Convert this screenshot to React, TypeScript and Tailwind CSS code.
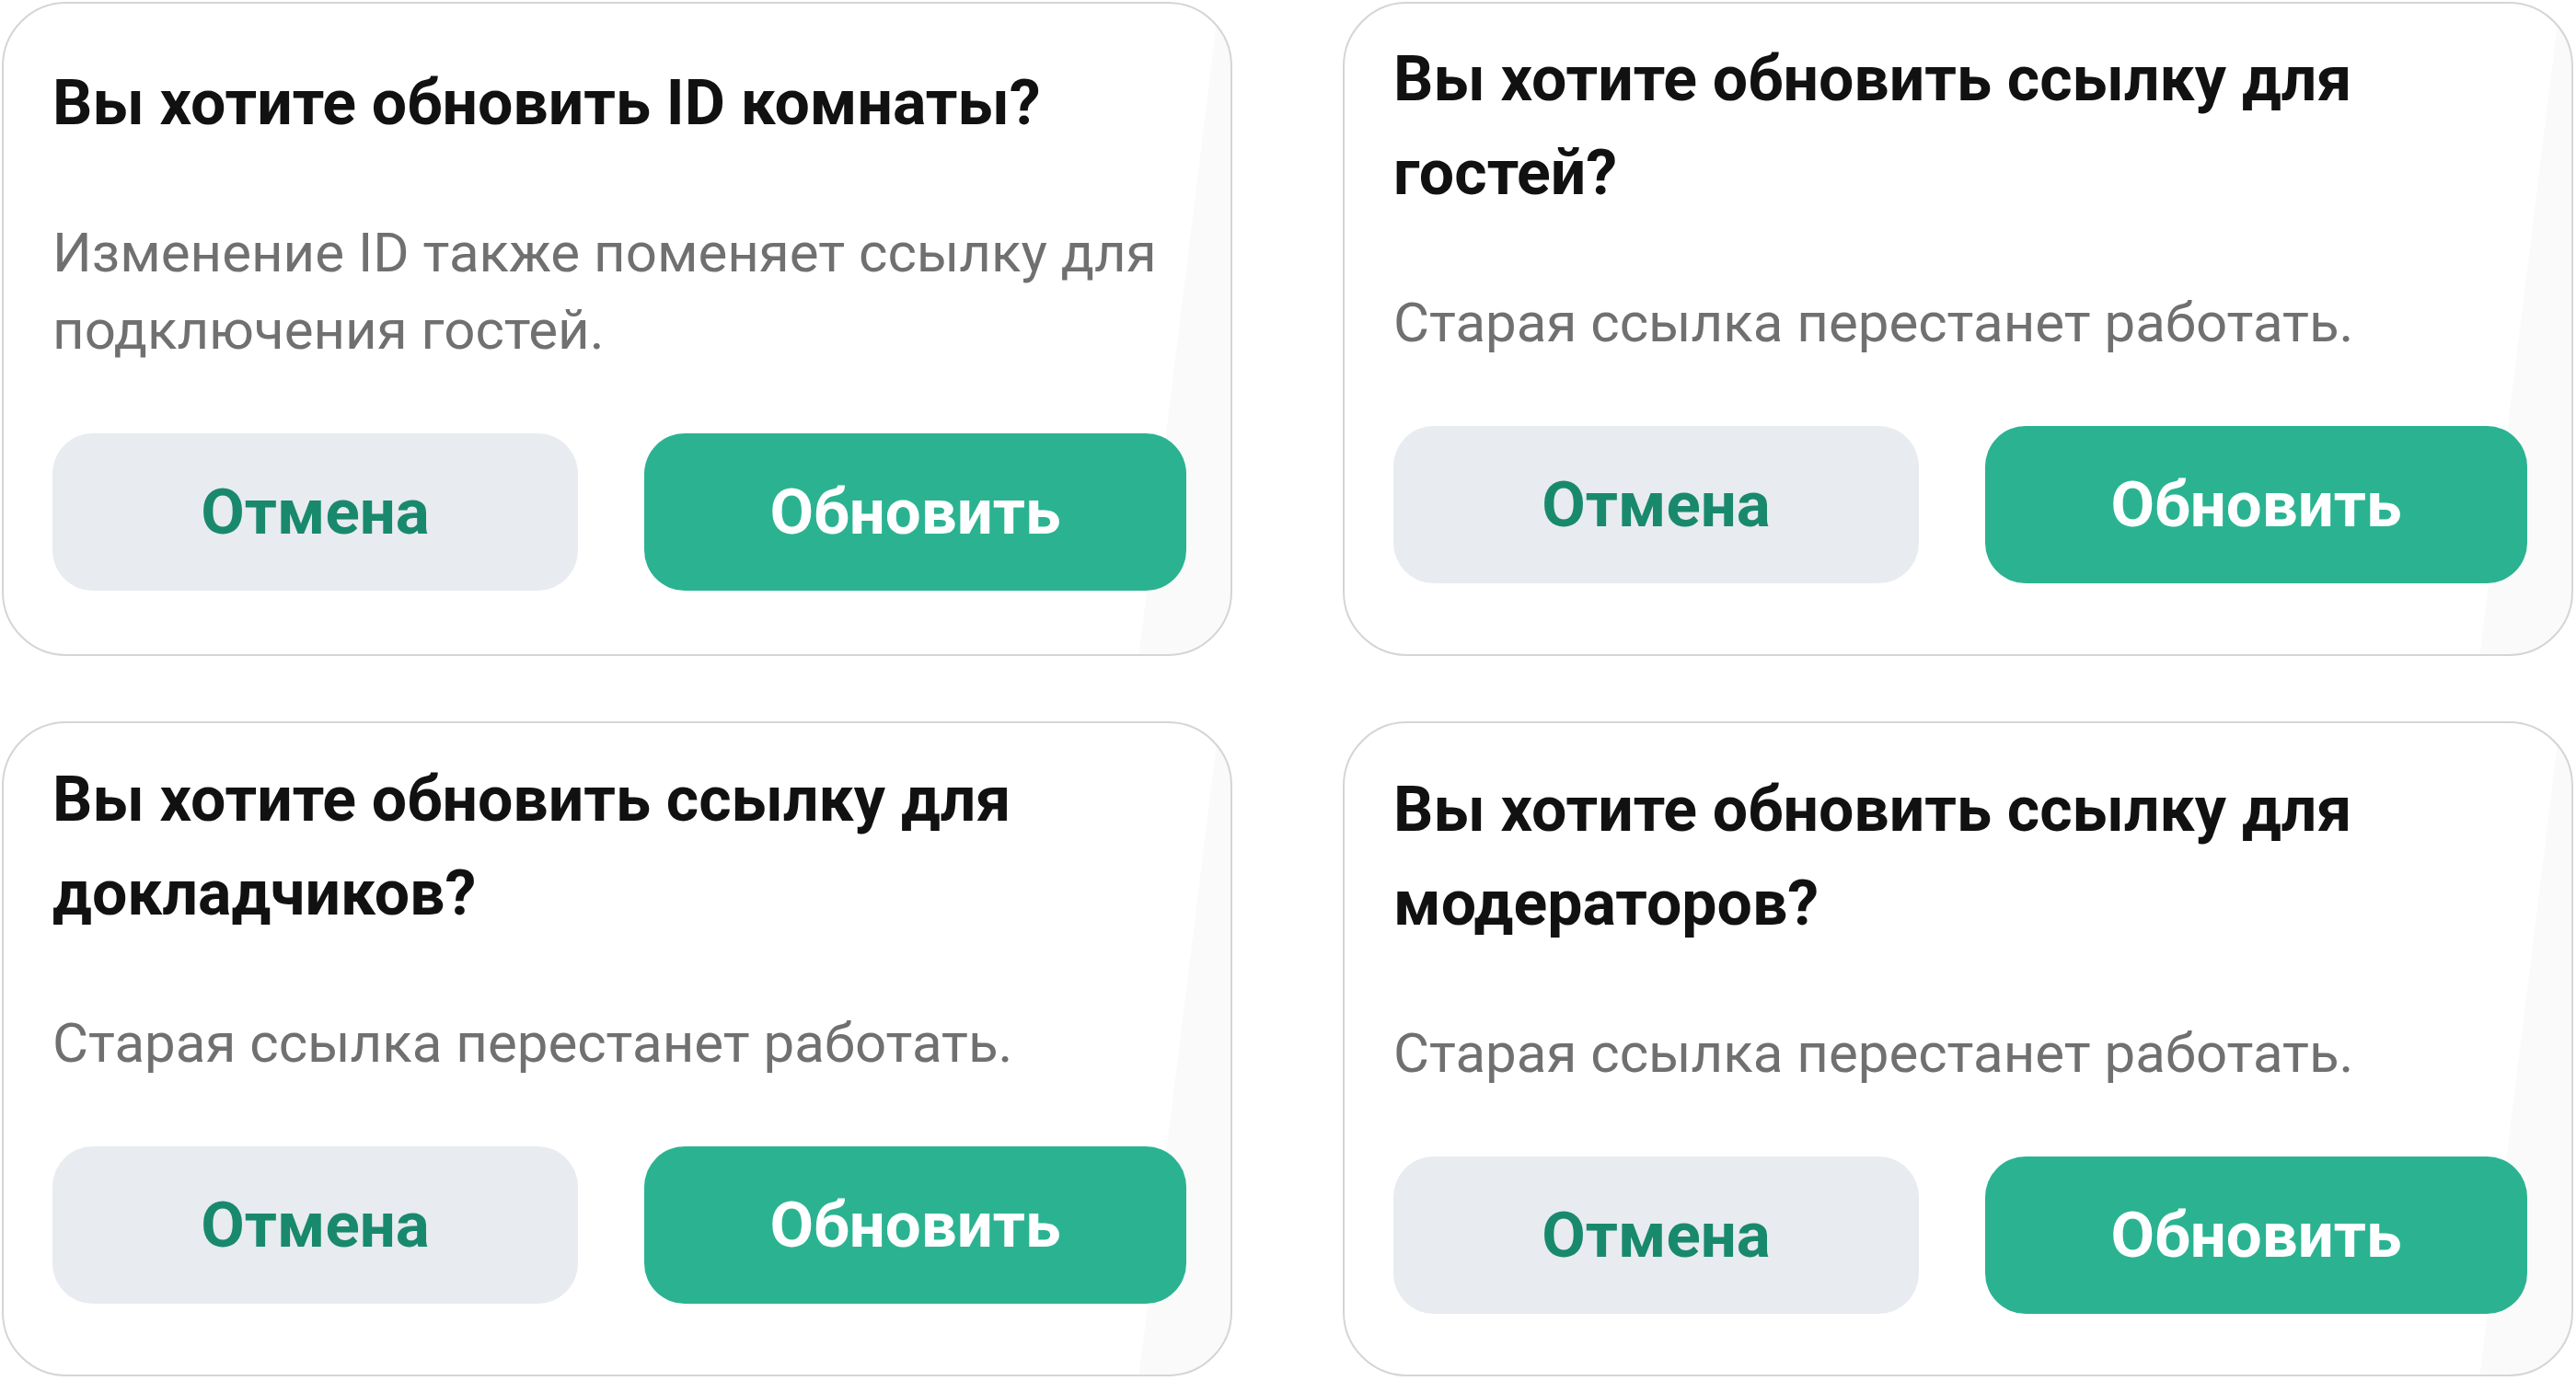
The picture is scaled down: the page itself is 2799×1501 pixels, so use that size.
import React from "react";

type Confirm = {
  title: string;
  text: string;
  pad: string;
};

const items: Confirm[] = [
  {
    title: "Вы хотите обновить ID комнаты?",
    text: "Изменение ID также поменяет ссылку для подключения гостей.",
    pad: "pt-[57px]",
  },
  {
    title: "Вы хотите обновить ссылку для гостей?",
    text: "Старая ссылка перестанет работать.",
    pad: "pt-[31px]",
  },
  {
    title: "Вы хотите обновить ссылку для докладчиков?",
    text: "Старая ссылка перестанет работать.",
    pad: "pt-[32px]",
  },
  {
    title: "Вы хотите обновить ссылку для модераторов?",
    text: "Старая ссылка перестанет работать.",
    pad: "pt-[43px]",
  },
];

const ConfirmBox = ({ data }: { data: Confirm }) => {
  return (
    <div
      className={`flex flex-col h-full border-2 border-[#d5d5d5] rounded-[70px] pl-[53px] pr-[48px] bg-[linear-gradient(97deg,#ffffff_93%,#fafafa_93%)] ${data.pad}`}
    >
      <h3 className="font-bold text-[68px] leading-[102px] text-[#111111]">
        {data.title}
      </h3>
      <p className="mt-[70px] text-[60px] leading-[84px] text-[#707070]">
        {data.text}
      </p>
      <div className="flex gap-[72px] mt-[70px]">
        <button className="w-[571px] h-[171px] rounded-[44px] bg-[#e8ebef] text-[#19896d] font-bold text-[69px]">
          Отмена
        </button>
        <button className="flex-1 h-[171px] rounded-[44px] bg-[#2bb391] text-white font-bold text-[69px]">
          Обновить
        </button>
      </div>
    </div>
  );
};

export default function App() {
  return (
    <div
      className="w-[2799px] h-[1501px] bg-white pt-[2px] pl-[2px]"
      style={{ fontFamily: "Roboto, 'Noto Sans', sans-serif" }}
    >
      <div className="grid grid-cols-[1337px_1337px] grid-rows-[711px_712px] gap-x-[120px] gap-y-[71px]">
        {items.map((item, i) => (
          <ConfirmBox key={i} data={item} />
        ))}
      </div>
    </div>
  );
}
